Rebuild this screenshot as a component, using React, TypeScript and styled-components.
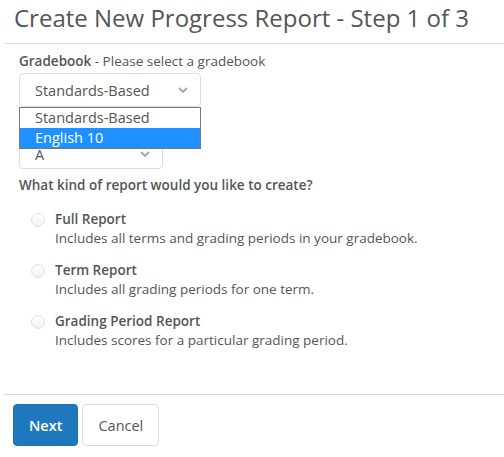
import React from 'react'
import styled, { createGlobalStyle } from 'styled-components'

const GlobalStyle = createGlobalStyle`
    body{
        margin: 0;
        background: #fff;
        font-family: "Open Sans", "Liberation Sans", sans-serif;
        color: #555;
    }
`

const options = [
    { title: 'Full Report', text: 'Includes all terms and grading periods in your gradebook.' },
    { title: 'Term Report', text: 'Includes all grading periods for one term.' },
    { title: 'Grading Period Report', text: 'Includes scores for a particular grading period.' },
]

const Chevron = () => (
    <svg width="12" height="8" viewBox="0 0 12 8">
        <path d="M2 2 L6 5.8 L10 2" fill="none" stroke="#aaa" strokeWidth="2" />
    </svg>
)

const App = () => {
    return (
        <Page>
            <GlobalStyle />
            <Header>Create New Progress Report - Step 1 of 3</Header>
            <Body>
                <Field>
                    <Label><b>Gradebook</b> - Please select a gradebook</Label>
                    <SelectWrap>
                        <Select width={182}>
                            <span>Standards-Based</span>
                            <Chevron />
                        </Select>
                        <Dropdown>
                            <li>Standards-Based</li>
                            <li className="active">English 10</li>
                        </Dropdown>
                    </SelectWrap>
                </Field>
                <Field gap={28}>
                    <Select width={144} tall>
                        <span>A</span>
                        <Chevron />
                    </Select>
                </Field>
                <Question>What kind of report would you like to create?</Question>
                <OptionList>
                    {options.map((o) => (
                        <Option key={o.title}>
                            <Radio />
                            <div>
                                <OptionTitle>{o.title}</OptionTitle>
                                <OptionText>{o.text}</OptionText>
                            </div>
                        </Option>
                    ))}
                </OptionList>
            </Body>
            <Footer>
                <Button primary>Next</Button>
                <Button>Cancel</Button>
            </Footer>
        </Page>
    )
}

const Page = styled.div`
    width: 504px;
    height: 457px;
    display: flex;
    flex-flow: column nowrap;
`

const Header = styled.h1`
    margin: 0 0 0 4px;
    padding: 1px 0 8px 10px;
    font-size: 24px;
    font-weight: 400;
    line-height: 34px;
    white-space: nowrap;
    color: #555;
    border-bottom: 1px solid #ddd;
`

const Body = styled.div`
    flex: 1 1 auto;
    padding: 8px 19px 0;
`

const Field = styled.div<{ gap?: number }>`
    margin-top: ${(p) => p.gap || 0}px;
`

const Label = styled.div`
    font-size: 13.5px;
    line-height: 19px;
    color: #555;
    margin-bottom: 2px;

    b{
        font-weight: 600;
    }
`

const SelectWrap = styled.div`
    position: relative;
`

const Select = styled.div<{ width: number; tall?: boolean }>`
    box-sizing: border-box;
    width: ${(p) => p.width}px;
    height: 34px;
    border: 1px solid #ddd;
    border-radius: 4px;
    display: flex;
    align-items: center;
    justify-content: space-between;
    padding: ${(p) => (p.tall ? '4px 11px 0 15px' : '0 11px 0 15px')};
    font-size: 14.5px;
    color: #555;
`

const Dropdown = styled.ul`
    position: absolute;
    top: 34px;
    left: 0;
    width: 182px;
    box-sizing: border-box;
    margin: 0;
    padding: 0;
    list-style: none;
    background: #fff;
    border: 1px solid #777;
    font-size: 14.5px;
    color: #555;
    z-index: 2;

    li{
        height: 20px;
        line-height: 20px;
        padding-left: 15px;
    }
    li.active{
        background: #1e90ff;
        color: #fff;
    }
`

const Question = styled.div`
    margin-top: 7px;
    font-size: 13.5px;
    font-weight: 600;
    line-height: 19px;
    color: #555;
`

const OptionList = styled.div`
    margin-top: 15px;
    padding-left: 12px;
    display: flex;
    flex-flow: column nowrap;
    gap: 13px;
`

const Option = styled.div`
    display: flex;
    align-items: flex-start;
    gap: 10px;
`

const Radio = styled.span`
    margin-top: 3px;
    width: 14px;
    height: 14px;
    border-radius: 50%;
    border: 1px solid #e2e2e2;
    background: linear-gradient(#fff, #f2f2f2);
    box-sizing: border-box;
    flex: 0 0 auto;
`

const OptionTitle = styled.div`
    font-size: 13.5px;
    font-weight: 600;
    line-height: 19px;
    color: #555;
`

const OptionText = styled.div`
    font-size: 13.5px;
    line-height: 19px;
    color: #555;
`

const Footer = styled.div`
    margin: 0 0 0 4px;
    border-top: 1px solid #ddd;
    padding: 9px 0 11px 9px;
    display: flex;
    gap: 4px;
`

const Button = styled.button<{ primary?: boolean }>`
    height: 42px;
    padding: 0 ${(p) => (p.primary ? 15 : 15)}px;
    border-radius: 4px;
    border: 1px solid ${(p) => (p.primary ? '#1a72b4' : '#ddd')};
    background: ${(p) => (p.primary ? '#1d78bd' : '#fff')};
    color: ${(p) => (p.primary ? '#fff' : '#555')};
    font-family: inherit;
    font-size: 14.5px;
    font-weight: ${(p) => (p.primary ? 600 : 400)};
`

export default App
